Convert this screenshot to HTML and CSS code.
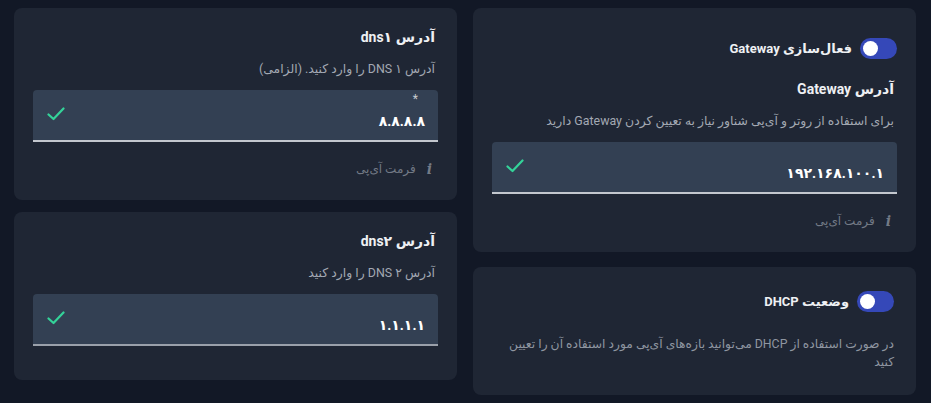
FILE: index.html
```html
<!DOCTYPE html>
<html lang="fa" dir="rtl">
<head>
  <meta charset="UTF-8">
  <title>تنظیمات شبکه</title>
  <link rel="stylesheet" href="styles.css">
</head>
<body>
<main class="grid">
  <div class="column column-right">
    <section class="card card-gateway">
      <div class="switch-row switch-row-top">
        <span class="switch"><span class="knob"></span></span>
        <span class="switch-label">فعال‌سازی Gateway</span>
      </div>
      <h3 class="card-title title-gateway">آدرس Gateway</h3>
      <p class="card-desc">برای استفاده از روتر و آی‌پی شناور نیاز به تعیین کردن Gateway دارید</p>
      <div class="field">
        <span class="field-value">۱۹۲.۱۶۸.۱۰۰.۱</span>
        <svg class="check" width="18" height="14" viewBox="0 0 18 14"><polyline points="1.5,7.5 6.5,12 16.5,1.5" /></svg>
      </div>
      <div class="hint"><span class="hint-icon">i</span><span>فرمت آی‌پی</span></div>
    </section>

    <section class="card card-dhcp">
      <div class="switch-row">
        <span class="switch"><span class="knob"></span></span>
        <span class="switch-label">وضعیت DHCP</span>
      </div>
      <p class="card-desc desc-long">در صورت استفاده از DHCP می‌توانید بازه‌های آی‌پی مورد استفاده آن را تعیین کنید</p>
    </section>
  </div>

  <div class="column column-left">
    <section class="card">
      <h3 class="card-title">آدرس dns۱</h3>
      <p class="card-desc">آدرس DNS ۱ را وارد کنید. (الزامی)</p>
      <div class="field">
        <span class="field-label">*</span>
        <span class="field-value">۸.۸.۸.۸</span>
        <svg class="check" width="18" height="14" viewBox="0 0 18 14"><polyline points="1.5,7.5 6.5,12 16.5,1.5" /></svg>
      </div>
      <div class="hint"><span class="hint-icon">i</span><span>فرمت آی‌پی</span></div>
    </section>

    <section class="card card-nohint">
      <h3 class="card-title">آدرس dns۲</h3>
      <p class="card-desc">آدرس DNS ۲ را وارد کنید</p>
      <div class="field field-dim">
        <span class="field-value">۱.۱.۱.۱</span>
        <svg class="check" width="18" height="14" viewBox="0 0 18 14"><polyline points="1.5,7.5 6.5,12 16.5,1.5" /></svg>
      </div>
    </section>
  </div>
</main>
</body>
</html>
```

FILE: styles.css
```css
html, body {
  margin: 0;
  background: #121826;
}
body {
  font-family: Roboto, "DejaVu Sans", sans-serif;
  color: #e8eaee;
  height: 403px;
  overflow: hidden;
}
.grid {
  display: grid;
  grid-template-columns: 443px 443px;
  column-gap: 16px;
  padding: 8px 15px 0 14px;
  align-items: start;
}
.column {
  display: flex;
  flex-direction: column;
}
.column-right {
  gap: 15px;
}
.column-left {
  gap: 12px;
}
.card {
  background: #1f2634;
  border-radius: 8px;
  padding: 18px 22px 20px;
}
.card-nohint {
  padding-bottom: 34px;
}
.card-title {
  margin: 0;
  font-size: 14px;
  font-weight: bold;
  line-height: 22px;
  color: #eef0f3;
}
.title-gateway {
  margin-top: 19px;
}
.card-desc {
  margin: 10px 0 0;
  font-size: 12.4px;
  line-height: 22px;
  color: #a3a9b3;
}
.desc-long {
  margin-top: 23px;
  font-size: 12.3px;
  line-height: 18px;
  color: #8f96a1;
}
.card-dhcp {
  padding-bottom: 24px;
}

/* toggle */
.switch-row {
  display: flex;
  align-items: center;
  gap: 8px;
  height: 22px;
  margin-top: 5px;
}
.switch-row-top {
  margin-top: 11px;
  margin-right: -3px;
}
.switch {
  display: flex;
  align-items: center;
  width: 37px;
  height: 21px;
  border-radius: 11px;
  background: #3548b8;
  padding: 0 3px;
  box-sizing: border-box;
  justify-content: flex-end;
}
.knob {
  width: 15px;
  height: 15px;
  border-radius: 50%;
  background: #ffffff;
}
.switch-label {
  font-size: 13px;
  font-weight: bold;
  color: #eef0f3;
}

/* input */
.field {
  position: relative;
  display: flex;
  align-items: center;
  justify-content: space-between;
  height: 52px;
  margin: 10px -3px 0;
  padding: 0 13px 0 14px;
  background: #334053;
  border-radius: 4px 4px 0 0;
  border-bottom: 2px solid #c3c7ce;
  box-sizing: border-box;
}
.field-dim {
  border-bottom-color: #9aa0aa;
}
.field-value {
  padding-top: 12px;
  font-size: 14px;
  font-weight: bold;
  letter-spacing: -0.5px;
  color: #ffffff;
  direction: ltr;
}
.field-label {
  position: absolute;
  top: 2px;
  right: 20px;
  font-size: 12px;
  color: #c9ccd2;
}
.check {
  margin-top: -2px;
}
.check polyline {
  fill: none;
  stroke: #34d399;
  stroke-width: 2.2;
  stroke-linecap: round;
  stroke-linejoin: round;
}

/* hint */
.hint {
  display: flex;
  align-items: center;
  gap: 8px;
  margin-top: 16px;
  line-height: 22px;
  font-size: 12px;
  color: #737a86;
}
.hint-icon {
  font-family: "DejaVu Serif", serif;
  font-style: italic;
  font-weight: bold;
  font-size: 14px;
  padding: 0 3px;
}
```
